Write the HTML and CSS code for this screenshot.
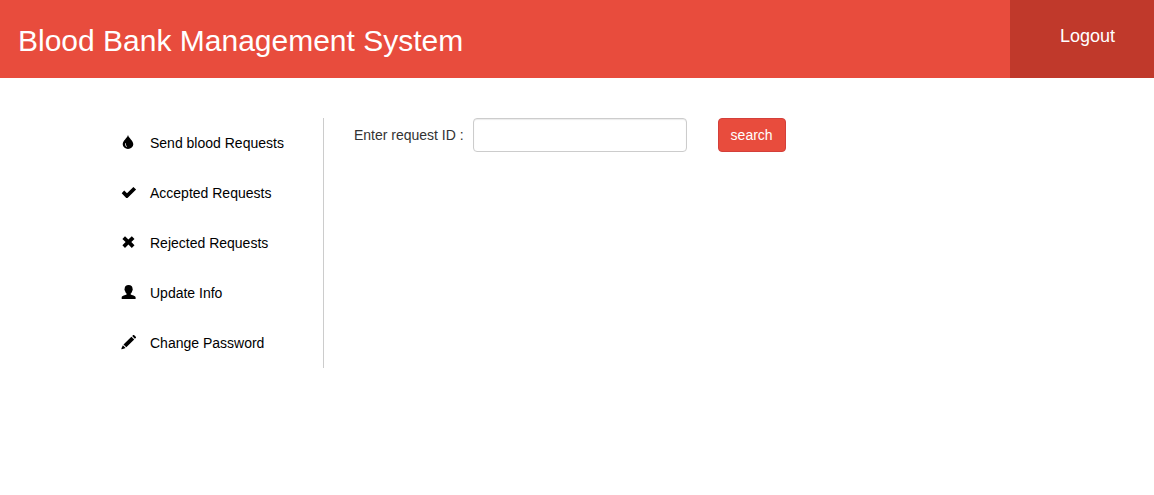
FILE: index.html
```html
<!DOCTYPE html>
<html lang="en">
<head>
<meta charset="utf-8">
<title>Blood Bank Management System</title>
<link rel="stylesheet" href="styles.css">
</head>
<body>
<header class="topbar">
  <h1 class="brand">Blood Bank Management System</h1>
  <a class="logout" href="#">Logout</a>
</header>
<div class="content">
  <nav class="sidebar">
    <a class="nav-link" href="#">
      <svg class="icon" viewBox="0 1 16 16" aria-hidden="true"><path fill-rule="evenodd" d="M7 .8C6.500 4 1.700 6.600 1.700 10.300a5.300 4.700 0 0 0 10.600 0C12.300 6.600 7.500 4 7 .8ZM4.300 9.300C3.900 11 4.700 12.700 6.200 13.200 5.300 12 4.800 10.800 4.900 9.100Z"/></svg>
      Send blood Requests</a>
    <a class="nav-link" href="#">
      <svg class="icon" viewBox="0 1 16 16" aria-hidden="true"><path d="M.7 9.200 3.200 6.600 6 9.200 12.400 2.900 15.100 5.400 6.500 14H5.200Z"/></svg>
      Accepted Requests</a>
    <a class="nav-link" href="#">
      <svg class="icon" viewBox="0 1 16 16" aria-hidden="true"><path d="M4 2.300 7.400 5.600 10.800 2.300 13.500 5 10.300 8.100 13.500 11.200 10.800 13.900 7.400 10.600 4 13.900 1.400 11.200 4.600 8.100 1.400 5Z"/></svg>
      Rejected Requests</a>
    <a class="nav-link" href="#">
      <svg class="icon" viewBox="0 1 16 16" aria-hidden="true"><path d="M7.600 1C10.200 1 11.500 2.300 11.500 4.500 12 5.200 11.700 6.400 11.200 6.900 10.900 8.200 10.400 9 9.700 9.600V10.500C10.800 11.300 14.600 11.700 14.600 13.200V15H.700V13.200C.700 11.700 4.500 11.300 5.600 10.500V9.600C4.900 9 4.400 8.200 4.100 6.900 3.600 6.400 3.200 5.200 3.700 4.500 3.700 2.300 5 1 7.600 1Z"/></svg>
      Update Info</a>
    <a class="nav-link" href="#">
      <svg class="icon" viewBox="0 1 16 16" aria-hidden="true"><path d="M12.200 1 13 1 15 3 15 3.800 13.900 4.800 11.200 2.100ZM10.400 2.700 13.200 5.500 5.300 13.300 2.500 10.500ZM1.900 11.200 4.600 13.900 1.800 14.900.300 15.200 .600 13.900Z"/></svg>
      Change Password</a>
  </nav>
  <main class="panel">
    <form class="search">
      <label class="label" for="request-id">Enter request ID :</label>
      <input class="field" id="request-id" type="text">
      <button class="submit" type="button">search</button>
    </form>
  </main>
</div>
</body>
</html>
```
FILE: styles.css
```css
* {
  box-sizing: border-box;
}

body {
  margin: 0;
  font-family: "Liberation Sans", Arial, sans-serif;
  font-size: 14px;
  line-height: 20px;
  color: #333;
  background: #fff;
}

.topbar {
  display: flex;
  justify-content: space-between;
  background: #e84c3d;
  color: #fff;
}

.brand {
  margin: 0;
  padding: 24px 18px 20px;
  font-size: 30px;
  font-weight: 400;
  line-height: 34px;
}

.logout {
  padding: 24px 39px 24px 50px;
  background: #c0392b;
  color: #fff;
  font-size: 18px;
  line-height: 24px;
  text-decoration: none;
}

.content {
  display: flex;
  padding: 40px 106px;
}

.sidebar {
  flex: none;
  border-right: 1px solid #ccc;
}

.nav-link {
  display: flex;
  align-items: center;
  gap: 13px;
  height: 50px;
  padding: 0 39px 0 15px;
  color: #000;
  text-decoration: none;
}

.icon {
  width: 16px;
  height: 16px;
  fill: currentColor;
}

.panel {
  flex: 1;
  padding-left: 30px;
}

.search {
  display: flex;
  align-items: center;
}

.label {
  margin-right: 9px;
}

.field {
  width: 214px;
  height: 34px;
  margin-right: 31px;
  padding: 6px 12px;
  border: 1px solid #ccc;
  border-radius: 4px;
  box-shadow: inset 0 1px 1px rgba(0, 0, 0, 0.08);
  font: inherit;
  color: #555;
}

.submit {
  height: 34px;
  padding: 6px 12px;
  border: 1px solid #d43f3a;
  border-radius: 4px;
  background: #e84c3d;
  color: #fff;
  font: inherit;
}
```
